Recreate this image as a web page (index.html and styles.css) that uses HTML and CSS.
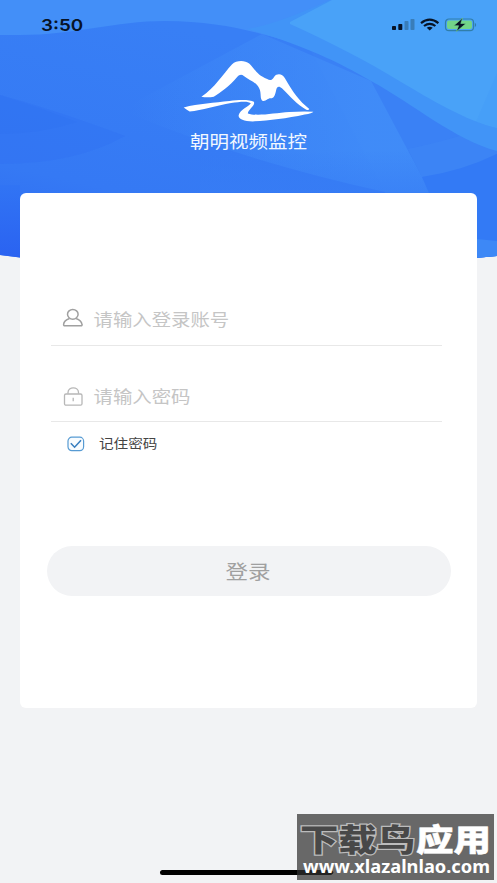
FILE: index.html
```html
<!DOCTYPE html>
<html lang="zh-CN">
<head>
<meta charset="utf-8">
<title>朝明视频监控</title>
<link rel="stylesheet" href="styles.css">
</head>
<body>
<div class="screen">
  <svg class="backdrop" viewBox="0 0 497 260" aria-hidden="true">
    <defs>
      <linearGradient id="base" gradientUnits="userSpaceOnUse" x1="0" y1="260" x2="60" y2="0">
        <stop offset="0" stop-color="#2c69f2"/><stop offset=".35" stop-color="#3579f4"/><stop offset="1" stop-color="#387ff5"/>
      </linearGradient>
      <linearGradient id="glow" gradientUnits="userSpaceOnUse" x1="130" y1="0" x2="370" y2="0">
        <stop offset="0" stop-color="#418df8" stop-opacity="0"/><stop offset="1" stop-color="#418df8" stop-opacity=".85"/>
      </linearGradient>
      <linearGradient id="fade" gradientUnits="userSpaceOnUse" x1="0" y1="150" x2="0" y2="192">
        <stop offset="0" stop-color="#377df5" stop-opacity="0"/><stop offset="1" stop-color="#377df5" stop-opacity=".6"/>
      </linearGradient>
      <linearGradient id="low" gradientUnits="userSpaceOnUse" x1="0" y1="185" x2="0" y2="260">
        <stop offset="0" stop-color="#3174f4"/><stop offset="1" stop-color="#2a62f1"/>
      </linearGradient>
      <clipPath id="curve"><path d="M0 0H497V256Q477 258 460 259H40Q20 258 0 255Z"/></clipPath>
    </defs>
    <g clip-path="url(#curve)">
      <path fill="url(#base)" d="M0 0H497V260H0Z"/>
      <path fill="#3a81f5" d="M300 30L497 100V260H420Z"/>
      <path fill="url(#glow)" d="M120 110L262 34L371 81L430 192H385Q240 160 120 110Z"/>
      <path fill="#438ff8" d="M0 0H340L290 42C260 33 220 21 165 21C115 21 75 35 20 35H0Z"/>
      <path fill="#2e6df2" fill-opacity=".3" d="M0 95Q55 110 125 136Q75 164 0 164Z"/>
      <path fill="#2e6df2" fill-opacity=".2" d="M0 95Q38 107 77 122Q40 134 0 134Z"/>
      <path fill="url(#fade)" d="M200 150Q300 156 408 149L430 192H200Z"/>
      <path fill="#458ff8" fill-opacity=".25" d="M408 149Q460 138 497 123V154Q460 172 422 177Z"/>
      <path fill="#4194f7" d="M247 29Q275 25 330 0H497V151C455 140 415 105 371 81C337 61 300 44 247 29Z"/>
      <path fill="#49a2f8" d="M290 22L332 0H497V128C466 121 430 99 401 82C365 60 332 43 290 24Z"/>
      <path fill="#439cf8" fill-opacity=".4" d="M497 73L476 122L497 128Z"/>
      <path fill="#337af5" d="M422 177Q462 171 497 154V260H458Z"/>
      <path fill="url(#low)" d="M0 185H20V260H0Z"/>
      <path fill="#3d88f6" d="M477 239L497 241V260H477Z"/>
    </g>
  </svg>

  <header class="statusbar">
    <span class="clock">3:50</span>
    <svg class="signals" viewBox="0 0 86 16" aria-hidden="true">
      <rect x="0" y="9" width="4" height="4" rx=".8" fill="#071326"/>
      <rect x="6.3" y="7" width="4" height="6" rx=".8" fill="#071326"/>
      <rect x="12.5" y="4" width="4" height="9" rx=".8" fill="#397db9"/>
      <rect x="18.5" y="2" width="4" height="11" rx=".8" fill="#397db9"/>
      <g fill="none" stroke="#071326" stroke-width="2.2">
        <path d="M29 6.2Q37.7-.8 46.4 6.2"/><path d="M32 9Q37.7 4.6 43.4 9"/>
      </g>
      <path fill="#071326" d="M34.7 10.8Q37.7 8.8 40.7 10.8L37.7 13.4Z"/>
      <rect x="53.5" y="2" width="28" height="11.6" rx="3.4" fill="none" stroke="#307eaa" stroke-width="1.2"/>
      <rect x="55" y="3.5" width="25" height="8.6" rx="2" fill="#72d489"/>
      <path fill="#307eaa" d="M82.8 5.8Q85.5 8 82.8 10.2Z"/>
      <path fill="#071326" stroke="#72d489" stroke-width=".6" d="M70.6 1L61.8 8.7H66.6L64.4 14.5L74 6.5H68.8Z"/>
    </svg>
  </header>

  <section class="brand">
    <svg class="logo" viewBox="25 15 392 184" aria-hidden="true">
      <g fill="#fff">
        <path d="M80 124C120 98 145 56 172 27C184 15 210 14 223 25C238 39 246 60 277 71C286 77 292 74 298 64C306 54 322 54 330 69C354 111 372 136 403 161Q401 166 394 163C365 148 346 123 321 99C313 91 306 93 304 103C300 122 297 128 288 129C279 128 275 138 264 137C254 132 260 114 254 101C244 78 222 75 207 62C201 57 194 57 187 65C165 91 139 111 117 124Q98 128 80 124Z"/>
        <path d="M27 156C72 145 120 142 164 137C193 133 226 133 237 139C243 150 220 162 219 174C246 184 298 173 343 170Q382 167 415 169Q412 174 389 177C335 189 281 195 234 198C205 198 188 190 192 178C196 164 222 153 228 144C221 136 194 139 169 143C126 150 81 166 45 168Q35 162 27 156Z"/>
      </g>
    </svg>
    <h1 class="name">朝明视频监控</h1>
  </section>

  <main class="card">
    <div class="field account">
      <svg class="field-icon" viewBox="0 0 22 22" aria-hidden="true">
        <g fill="none" stroke="#a0a0a0" stroke-width="1.5" stroke-linejoin="round">
          <ellipse cx="10.8" cy="6.3" rx="5.3" ry="4.9"/><path d="M7.5 10.5C3.5 11.8 1.7 14.2 1.6 16.6Q1.5 17.8 2.8 17.8H18.9Q20.3 17.8 20 16.5C19.7 14 17.9 11.8 14.1 10.5"/>
        </g>
      </svg>
      <span class="placeholder">请输入登录账号</span>
    </div>
    <div class="field password">
      <svg class="field-icon" viewBox="0 0 22 22" aria-hidden="true">
        <g fill="none" stroke="#b7b7b7" stroke-width="1.3">
          <rect x="2.5" y="9" width="17.5" height="11.2" rx="1.5"/><path d="M6 8.8V7.5C6 1.4 16.5 1.4 16.5 7.5V8.8M11.2 12.7V16.3"/>
        </g>
      </svg>
      <span class="placeholder">请输入密码</span>
    </div>
    <div class="remember">
      <svg class="check" viewBox="0 0 18 16" aria-hidden="true">
        <rect x="1" y="1.2" width="15.6" height="13.4" rx="3.8" fill="#f8fcff" stroke="#579bd3" stroke-width="1.2"/>
        <path d="M3.8 7.3L7.6 11.2L14 4.3" fill="none" stroke="#387fc0" stroke-width="1.6"/>
      </svg>
      <span class="remember-label">记住密码</span>
    </div>
    <div class="submit"><span class="submit-label">登录</span></div>
  </main>

  <div class="home-indicator"></div>
  <div class="watermark">
    <svg class="wm-art" viewBox="0 0 197 66" aria-hidden="true">
      <path class="wm-shadow" d="M0 56H34Q39 58.5 34 61H0Z"/>
      <text class="wm-title wm-dark" x="3" y="37" textLength="115" lengthAdjust="spacingAndGlyphs">下载鸟</text>
      <text class="wm-title wm-light" x="119" y="37" textLength="75" lengthAdjust="spacingAndGlyphs">应用</text>
      <text class="wm-url" x="6" y="59" textLength="187" lengthAdjust="spacingAndGlyphs">www.xlazalnlao.com</text>
    </svg>
  </div>
</div>
</body>
</html>
```
FILE: styles.css
```css
* { box-sizing: border-box; }
body {
  margin: 0;
  background: #f2f3f5;
  font-family: "Noto Sans CJK SC", sans-serif;
}
.screen {
  position: relative;
  display: flex;
  flex-direction: column;
  height: 883px;
  overflow: hidden;
}
.backdrop {
  position: absolute;
  top: 0;
  left: 0;
  width: 497px;
  height: 260px;
}
.statusbar {
  position: relative;
  display: flex;
  justify-content: space-between;
  align-items: center;
  height: 49px;
  padding: 0 19px 0 41px;
}
.clock {
  color: #071326;
  font: 600 16.5px/20px Inter, sans-serif;
  transform: scaleX(1.14);
  transform-origin: left;
}
.signals { width: 86px; height: 16px; }
.brand {
  position: relative;
  display: flex;
  flex-direction: column;
  align-items: center;
  height: 144px;
  padding-top: 11px;
}
.logo { width: 131px; height: 62px; }
.name {
  margin: 8px 0 0;
  color: #f2f8ff;
  font-size: 19.5px;
  font-weight: 400;
  line-height: 22px;
  transform: scaleY(.88);
}
.card {
  position: relative;
  width: 457px;
  height: 515px;
  margin-left: 20px;
  padding: 96px 27px 0;
  border-radius: 6px;
  background: #fff;
}
.field {
  display: flex;
  align-items: center;
  gap: 9.5px;
  height: 57px;
  margin: 0 8px 0 4px;
  padding: 0 0 1px 11px;
  border-bottom: 1px solid #e8e8e8;
}
.account { padding-top: 5px; }
.password { height: 76px; padding-top: 26px; }
.field-icon { width: 22px; height: 22px; }
.placeholder {
  color: #c5c5c5;
  font-size: 19.4px;
  font-weight: 400;
  line-height: 22px;
  transform: scaleY(.86);
}
.remember {
  display: flex;
  align-items: center;
  gap: 14px;
  height: 44px;
  padding-left: 20px;
}
.check { width: 18px; height: 16px; }
.remember-label {
  margin-top: -2px;
  color: #444;
  font-size: 14.6px;
  line-height: 18px;
  transform: scaleY(.87);
}
.submit {
  display: flex;
  align-items: center;
  justify-content: center;
  height: 50px;
  margin-top: 80px;
  width: 404px;
  padding: 0 2px 3px 0;
  border-radius: 25px;
  background: #f2f3f5;
}
.submit-label {
  color: #a0a0a0;
  font-size: 22.5px;
  font-weight: 400;
  line-height: 26px;
  transform: scaleY(.85);
}
.home-indicator {
  position: absolute;
  left: 160px;
  top: 870px;
  width: 177px;
  height: 5px;
  border-radius: 3px;
  background: #000;
}
.watermark {
  position: absolute;
  left: 297px;
  top: 814px;
  width: 197px;
  height: 66px;
  background: #686868;
}
.wm-art { display: block; width: 197px; height: 66px; }
.wm-shadow { fill: #222; }
.wm-title { font-size: 31px; font-weight: 900; }
.wm-dark { fill: #484848; stroke: #bbb; stroke-width: 2.4px; paint-order: stroke; }
.wm-light { fill: #fff; stroke: #fff; stroke-width: .5px; }
.wm-url { fill: #fff; font: 700 17px "Noto Sans", sans-serif; }
```
